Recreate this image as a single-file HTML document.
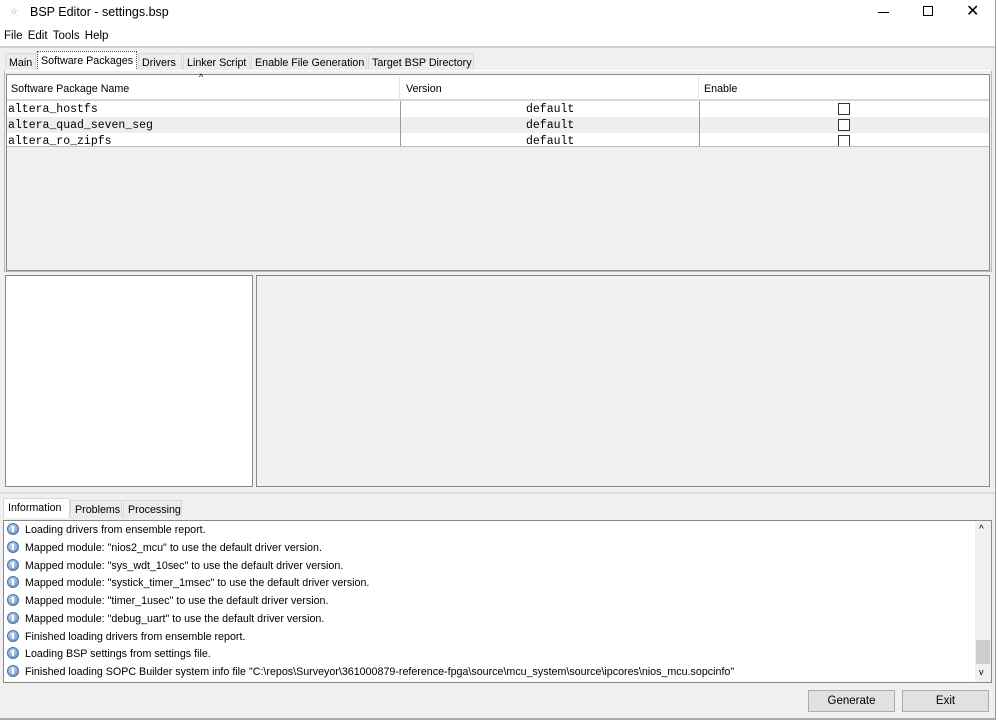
<!DOCTYPE html>
<html><head><meta charset="utf-8"><style>
*{margin:0;padding:0;box-sizing:border-box}
body{width:999px;height:720px;overflow:hidden;background:#f0f0f0;font-family:"Liberation Sans",sans-serif;font-size:10.7px;color:#000;position:relative}
.a{position:absolute}
.mono{font-family:"Liberation Mono",monospace;font-size:11.5px}
.tab{position:absolute;top:53px;height:17px;border:1px solid #d9d9d9;border-bottom:none;background:#ececec;padding:3px 3px 0;white-space:nowrap}
.btab{position:absolute;height:18px;border:1px solid #d9d9d9;border-bottom:none;background:#ececec;padding:3px 4px 0;white-space:nowrap}
.row{position:absolute;left:0;width:983px;height:16px}
.cb{position:absolute;width:12px;height:12px;border:1px solid #333;background:#fff}
.log{position:absolute;left:3px;height:18px;line-height:18px;white-space:nowrap;font-size:10.7px}
.ic{display:inline-block;width:12px;height:12px;border-radius:50%;background:radial-gradient(circle at 40% 35%,#c8dcf2,#5a88c0);border:1px solid #4a70a8;vertical-align:-2px;margin-right:6px;position:relative}
.ic:after{content:"";position:absolute;left:4px;top:2px;width:2px;height:6px;background:#fff}
.btn{position:absolute;top:690px;height:22px;border:1px solid #adadad;background:#e1e1e1;text-align:center;line-height:20px;font-size:11.5px}
</style></head><body>
<div class="a" style="left:0;top:0;width:999px;height:46px;background:#fff"></div>
<div class="a" style="left:10px;top:6px;font-size:9px;color:#999">☆</div>
<div class="a" style="left:30px;top:5px;font-size:12.5px">BSP Editor - settings.bsp</div>
<div class="a" style="left:878px;top:12px;width:11px;height:1px;background:#000"></div>
<div class="a" style="left:923px;top:6px;width:10px;height:10px;border:1px solid #000"></div>
<div class="a" style="left:966px;top:1px;font-size:16px">✕</div>
<div class="a" style="left:4px;top:30px;font-size:11.5px;word-spacing:2px">File&nbsp;Edit&nbsp;Tools&nbsp;Help</div>
<div class="a" style="left:0;top:46px;width:995px;height:2px;background:#d0d0d0"></div>
<div class="a" style="left:995px;top:0;width:4px;height:720px;background:#fff;border-left:1px solid #999"></div>

<div class="tab" style="left:5px;width:31px">Main</div>
<div class="tab" style="left:37px;top:51px;height:20px;width:100px;background:#fff;border:1px dotted #555;border-bottom:none">Software Packages</div>
<div class="tab" style="left:138px;width:44px">Drivers</div>
<div class="tab" style="left:183px;width:67px">Linker Script</div>
<div class="tab" style="left:251px;width:116px">Enable File Generation</div>
<div class="tab" style="left:368px;width:106px">Target BSP Directory</div>

<div class="a" style="left:4px;top:70px;width:988px;height:202px;border:1px solid #bbb;border-top-color:#fff"></div>
<div class="a" style="left:6px;top:74px;width:984px;height:197px;border:1px solid #888;background:#f0f0f0"></div>
<div class="a" style="left:7px;top:75px;width:982px;height:26px;background:#fff;border-bottom:2px solid #d8d8d8"></div>
<div class="a" style="left:199px;top:72px;font-size:9px">^</div>
<div class="a" style="left:11px;top:83px">Software Package Name</div>
<div class="a" style="left:406px;top:83px">Version</div>
<div class="a" style="left:704px;top:83px">Enable</div>
<div class="a" style="left:399px;top:76px;width:1px;height:24px;background:#e5e5e5"></div>
<div class="a" style="left:698px;top:76px;width:1px;height:24px;background:#e5e5e5"></div>
<div class="a" style="left:7px;top:101px;width:982px;height:46px;background:#fff;border-bottom:1px solid #bbb;overflow:hidden">
 <div class="row" style="top:0"></div>
 <div class="row" style="top:16px;background:#eeeeee"></div>
 <div class="a mono" style="left:1px;top:2px">altera_hostfs</div>
 <div class="a mono" style="left:1px;top:18px">altera_quad_seven_seg</div>
 <div class="a mono" style="left:1px;top:34px">altera_ro_zipfs</div>
 <div class="a mono" style="left:519px;top:2px">default</div>
 <div class="a mono" style="left:519px;top:18px">default</div>
 <div class="a mono" style="left:519px;top:34px">default</div>
 <div class="a" style="left:393px;top:0;width:1px;height:46px;background:#999"></div>
 <div class="a" style="left:692px;top:0;width:1px;height:46px;background:#999"></div>
 <div class="cb" style="left:831px;top:2px"></div>
 <div class="cb" style="left:831px;top:18px"></div>
 <div class="cb" style="left:831px;top:34px"></div>
</div>

<div class="a" style="left:5px;top:275px;width:248px;height:212px;border:1px solid #888;background:#fff"></div>
<div class="a" style="left:256px;top:275px;width:734px;height:212px;border:1px solid #888;background:#f0f0f0"></div>
<div class="a" style="left:0;top:492px;width:995px;height:2px;background:#ddd"></div>

<div class="btab" style="left:3px;top:498px;height:20px;width:67px;background:#fff">Information</div>
<div class="btab" style="left:70px;top:500px;width:52px">Problems</div>
<div class="btab" style="left:123px;top:500px;width:59px">Processing</div>

<div class="a" style="left:3px;top:520px;width:989px;height:163px;border:1px solid #888;background:#fff;overflow:hidden">
 <div class="log" style="top:0"><span class="ic"></span>Loading drivers from ensemble report.</div>
 <div class="log" style="top:18px"><span class="ic"></span>Mapped module: "nios2_mcu" to use the default driver version.</div>
 <div class="log" style="top:36px"><span class="ic"></span>Mapped module: "sys_wdt_10sec" to use the default driver version.</div>
 <div class="log" style="top:53px"><span class="ic"></span>Mapped module: "systick_timer_1msec" to use the default driver version.</div>
 <div class="log" style="top:71px"><span class="ic"></span>Mapped module: "timer_1usec" to use the default driver version.</div>
 <div class="log" style="top:89px"><span class="ic"></span>Mapped module: "debug_uart" to use the default driver version.</div>
 <div class="log" style="top:107px"><span class="ic"></span>Finished loading drivers from ensemble report.</div>
 <div class="log" style="top:124px"><span class="ic"></span>Loading BSP settings from settings file.</div>
 <div class="log" style="top:142px"><span class="ic"></span>Finished loading SOPC Builder system info file "C:\repos\Surveyor\361000879-reference-fpga\source\mcu_system\source\ipcores\nios_mcu.sopcinfo"</div>
 <div class="a" style="left:971px;top:0;width:16px;height:161px;background:#f0f0f0"></div>
 <div class="a" style="left:975px;top:3px;font-size:10px">^</div>
 <div class="a" style="left:975px;top:146px;font-size:9px">v</div>
 <div class="a" style="left:972px;top:119px;width:14px;height:24px;background:#cdcdcd"></div>
</div>
<div class="btn" style="left:808px;width:87px">Generate</div>
<div class="btn" style="left:902px;width:87px">Exit</div>
<div class="a" style="left:0;top:718px;width:995px;height:2px;background:#aaa"></div>
</body></html>
